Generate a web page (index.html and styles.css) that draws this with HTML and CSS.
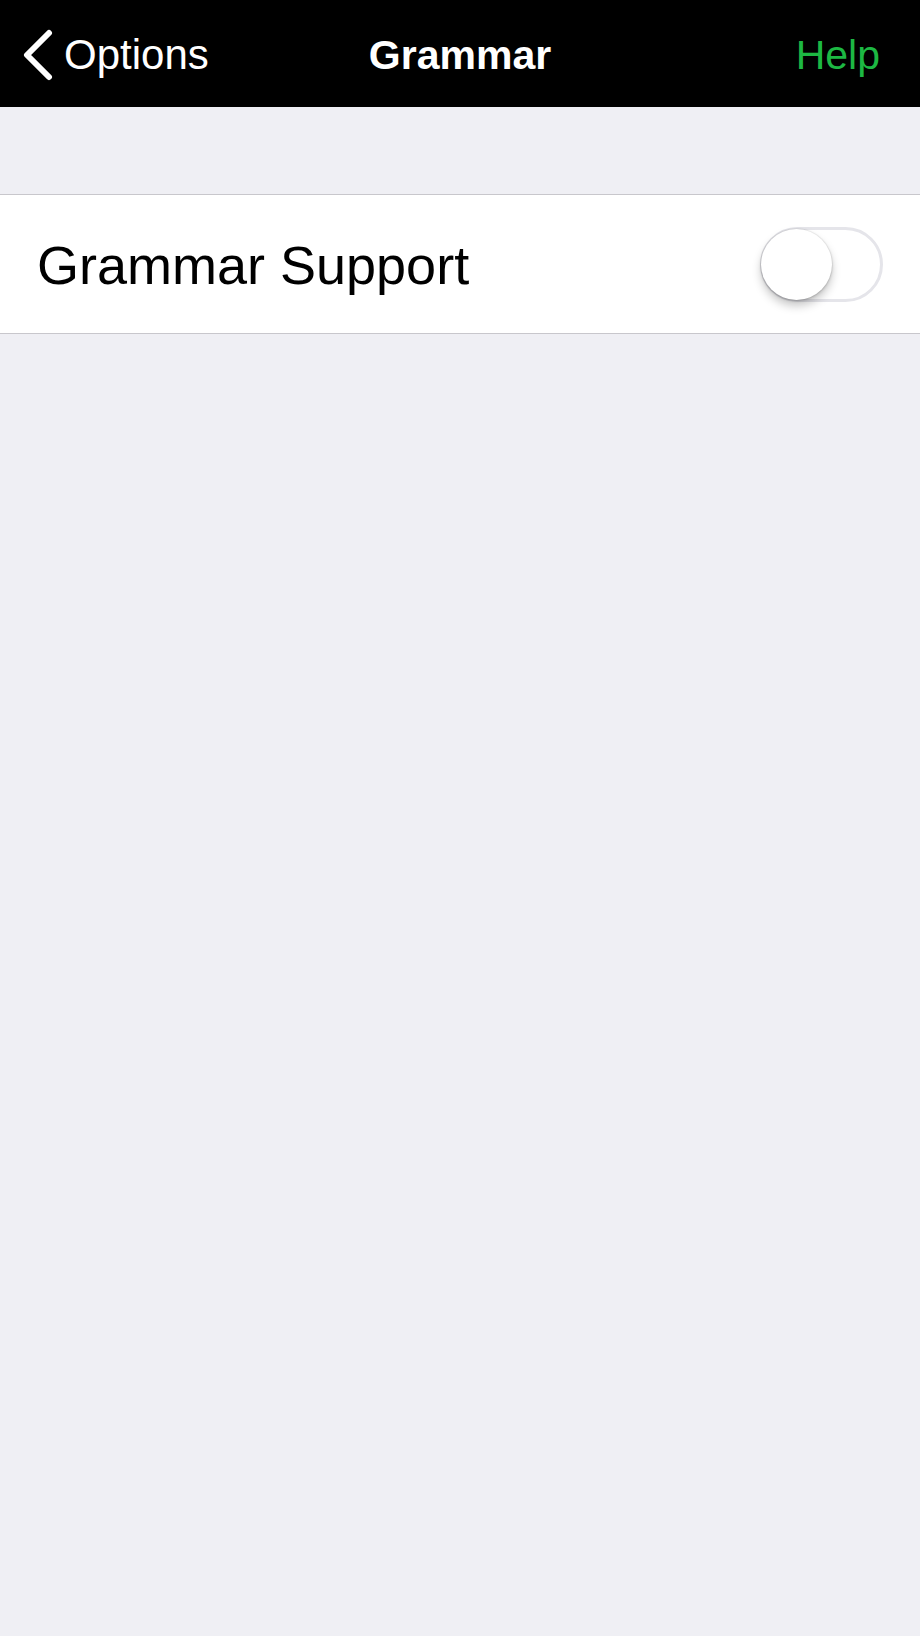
FILE: index.html
```html
<!DOCTYPE html>
<html lang="en">
<head>
<meta charset="utf-8">
<title>Grammar</title>
<link rel="stylesheet" href="styles.css">
</head>
<body>
<header class="navbar">
  <div class="nav-left">
    <svg class="chevron" width="32" height="52" viewBox="0 0 32 52" aria-hidden="true">
      <polyline points="27,4 5,26 27,48" fill="none" stroke="#ffffff" stroke-width="6" stroke-linecap="round" stroke-linejoin="round"/>
    </svg>
    <span class="nav-back">Options</span>
  </div>
  <h1 class="nav-title">Grammar</h1>
  <div class="nav-right">
    <span class="nav-help">Help</span>
  </div>
</header>
<main class="content">
  <section class="group">
    <div class="row">
      <span class="row-label">Grammar Support</span>
      <div class="switch">
        <div class="switch-knob"></div>
      </div>
    </div>
  </section>
</main>
</body>
</html>
```
FILE: styles.css
```css
html, body {
  margin: 0;
  padding: 0;
}
body {
  width: 920px;
  min-height: 1636px;
  background: #efeff4;
  font-family: "Liberation Sans", Arial, sans-serif;
  color: #000;
}
.navbar {
  height: 107px;
  background: #000;
  display: grid;
  grid-template-columns: 1fr auto 1fr;
  align-items: center;
  padding: 0 22px;
  box-sizing: border-box;
}
.nav-left {
  display: flex;
  align-items: center;
  gap: 10px;
  padding-top: 2px;
}
.chevron {
  display: block;
}
.nav-back {
  color: #fff;
  font-size: 42px;
  line-height: 1;
}
.nav-title {
  margin: 0;
  color: #fff;
  font-size: 41px;
  font-weight: 700;
  line-height: 1;
  padding-top: 4px;
}
.nav-right {
  display: flex;
  justify-content: flex-end;
  padding: 4px 18px 0 0;
}
.nav-help {
  color: #1db843;
  font-size: 41px;
  line-height: 1;
}
.content {
  padding-top: 87px;
}
.group {
  background: #fff;
  border-top: 1px solid #c8c7cc;
  border-bottom: 1px solid #c8c7cc;
}
.row {
  height: 138px;
  display: flex;
  align-items: center;
  justify-content: space-between;
  padding: 0 37px 0 37px;
}
.row-label {
  font-size: 54px;
  line-height: 1;
  padding-top: 2px;
}
.switch {
  position: relative;
  width: 123px;
  height: 75px;
  box-sizing: border-box;
  border: 3px solid #e5e5ea;
  border-radius: 38px;
  background: #fff;
}
.switch-knob {
  position: absolute;
  left: -2px;
  top: -1px;
  width: 71px;
  height: 71px;
  border-radius: 50%;
  background: #fff;
  box-shadow: 0 6px 10px rgba(0, 0, 0, 0.22), 0 1px 3px rgba(0, 0, 0, 0.18), 0 0 0 1px rgba(0, 0, 0, 0.04);
}
```
